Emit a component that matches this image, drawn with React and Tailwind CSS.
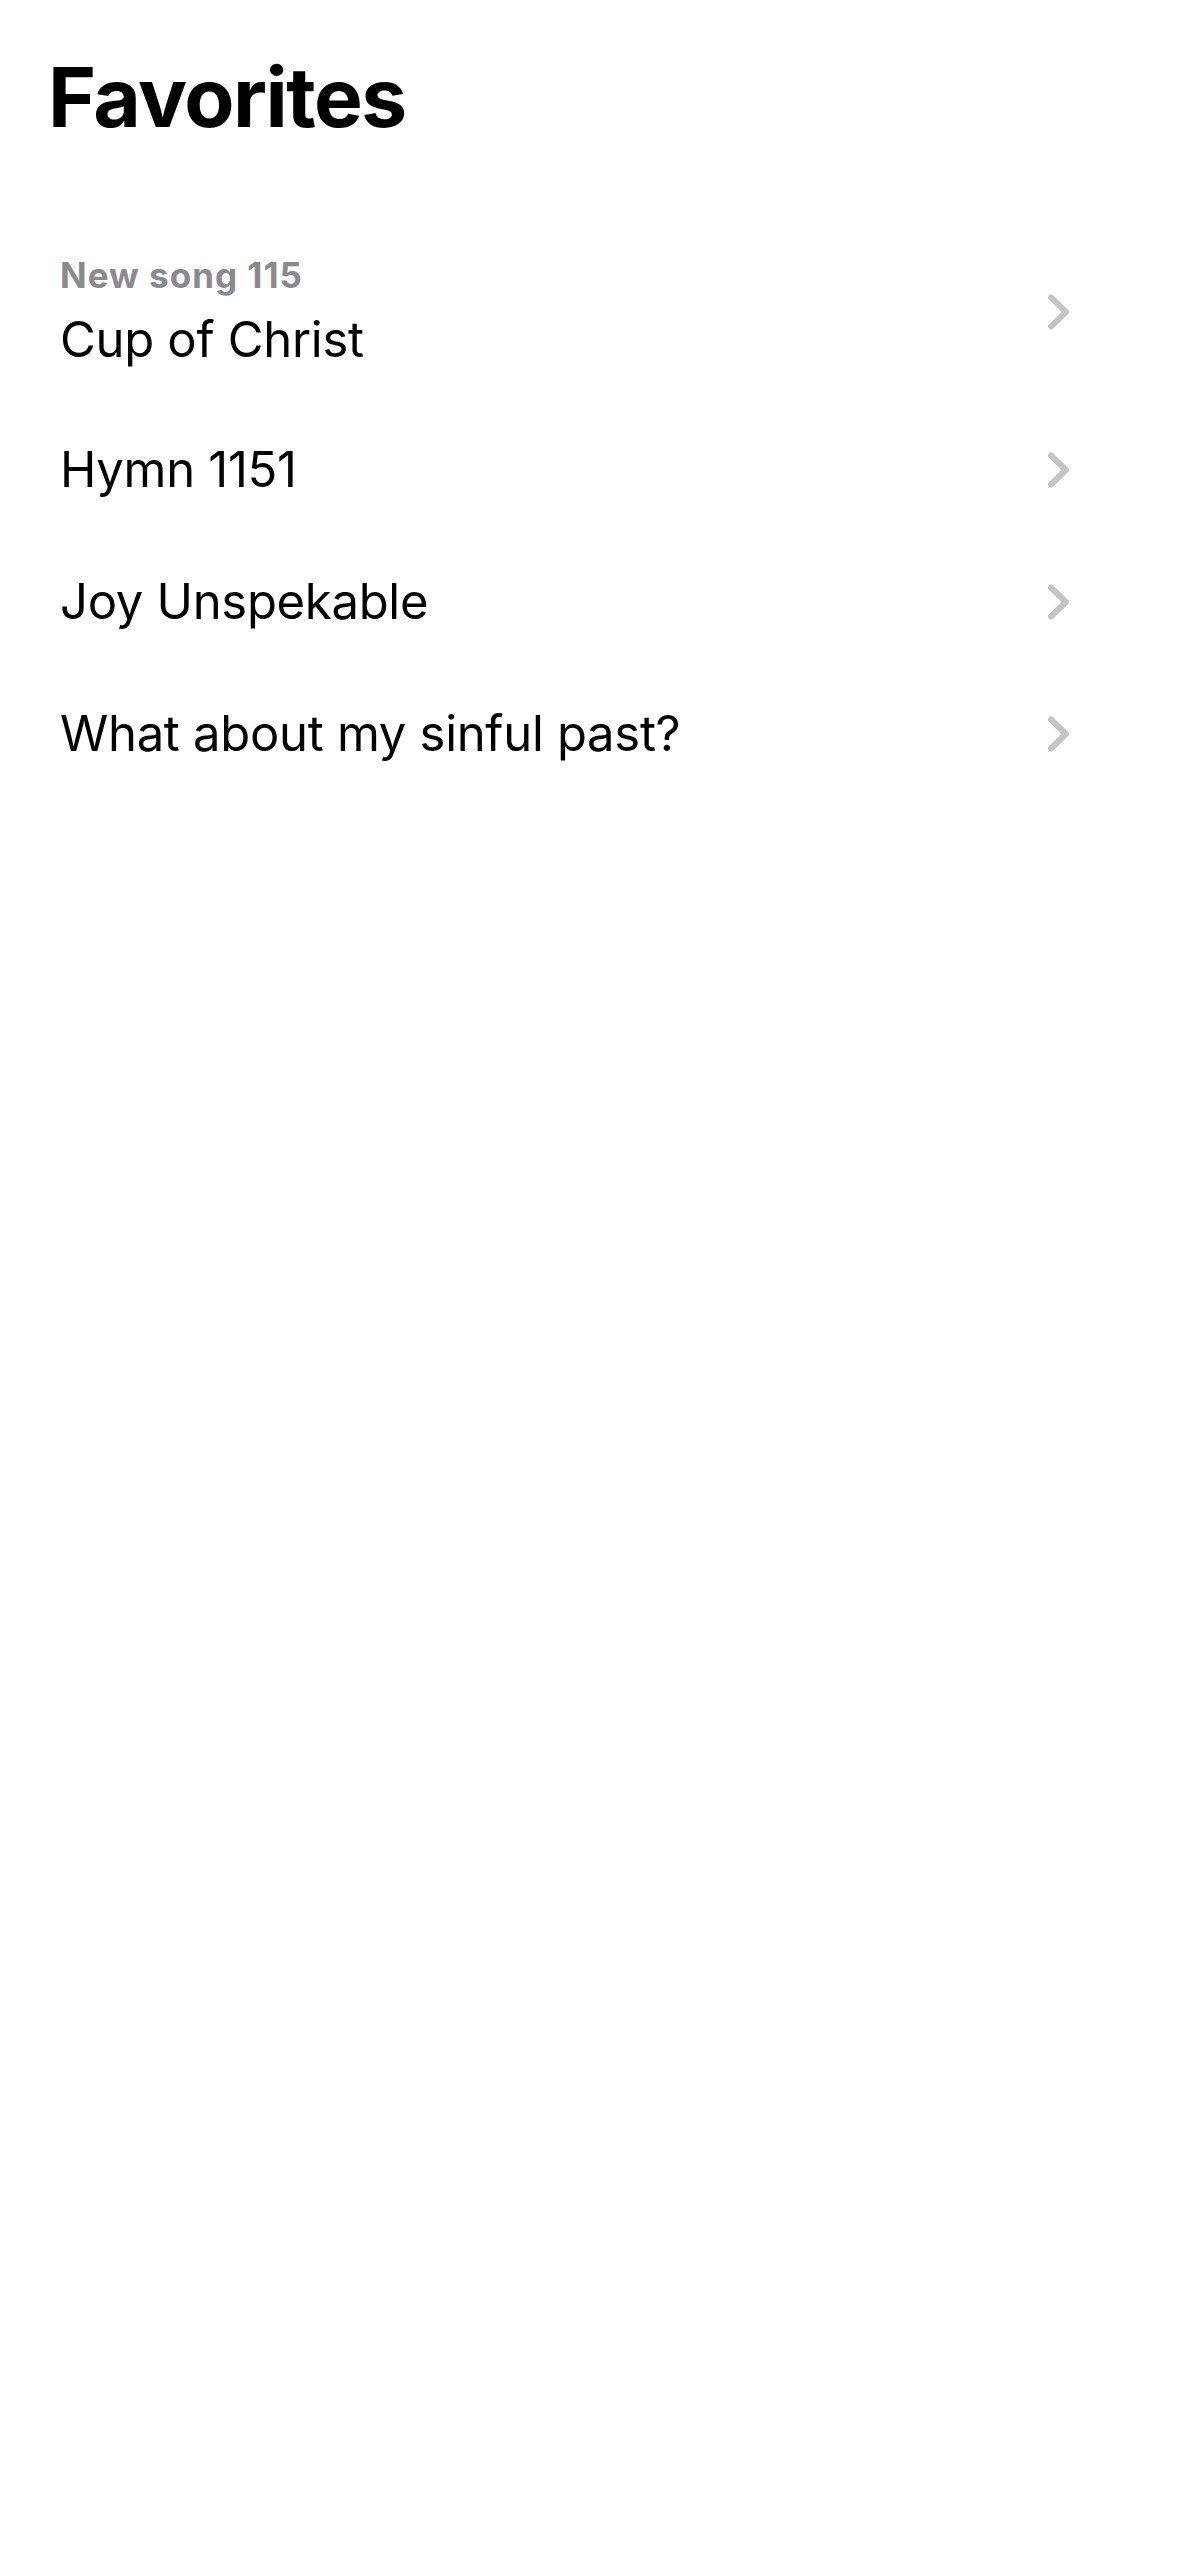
import React from "react";

const songs = [
  { id: 1, group: "New song 115", title: "Cup of Christ" },
  { id: 2, title: "Hymn 1151" },
  { id: 3, title: "Joy Unspekable" },
  { id: 4, title: "What about my sinful past?" },
];

function Chevron() {
  return (
    <svg width="26" height="44" viewBox="0 0 26 44" fill="none" className="shrink-0">
      <polyline
        points="7,7.5 22,22 7,36.5"
        stroke="#c4c4c7"
        strokeWidth="6"
        strokeLinecap="round"
        strokeLinejoin="round"
      />
    </svg>
  );
}

function SongRow({ song }) {
  return (
    <div
      className={`flex items-center justify-between pl-[60px] pr-[109px] ${
        song.group ? "h-[184px]" : "h-[132px]"
      }`}
    >
      <div className="flex flex-col gap-[14px]">
        {song.group && (
          <div className="text-[35px] leading-[42px] font-bold tracking-[1px] text-[#8a8a8e]">
            {song.group}
          </div>
        )}
        <div className="text-[49px] leading-[60px] tracking-[-0.3px] text-black">
          {song.title}
        </div>
      </div>
      <Chevron />
    </div>
  );
}

export default function App() {
  return (
    <div
      className="w-[1179px] h-[2556px] bg-white"
      style={{ fontFamily: "Inter, 'Noto Sans', sans-serif" }}
    >
      <h1 className="pl-[48px] pt-[48px] text-[82px] leading-[100px] font-bold tracking-[-1.5px] text-black">
        Favorites
      </h1>
      <div className="mt-[72px]">
        {songs.map(song => (
          <SongRow key={song.id} song={song} />
        ))}
      </div>
    </div>
  );
}
